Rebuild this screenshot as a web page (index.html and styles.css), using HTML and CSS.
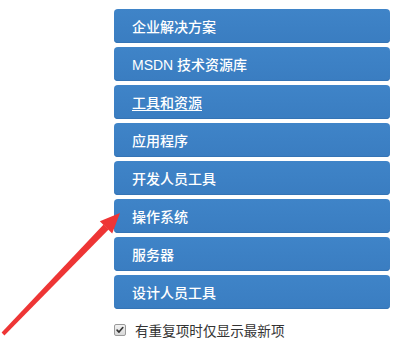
FILE: index.html
```html
<!DOCTYPE html>
<html lang="zh-CN">
<head>
<meta charset="utf-8">
<title>菜单</title>
<link rel="stylesheet" href="styles.css">
</head>
<body>
<div class="page">
  <ul class="menu">
    <li class="item">企业解决方案</li>
    <li class="item">MSDN 技术资源库</li>
    <li class="item"><span class="link">工具和资源</span></li>
    <li class="item">应用程序</li>
    <li class="item">开发人员工具</li>
    <li class="item">操作系统</li>
    <li class="item">服务器</li>
    <li class="item">设计人员工具</li>
  </ul>
  <label class="option">
    <span class="box"><svg viewBox="0 0 11 11" width="11" height="11"><path d="M2.3 5.6 L4.4 7.8 L8.6 2.8" fill="none" stroke="#333" stroke-width="1.8" stroke-linecap="round" stroke-linejoin="round"/></svg></span>
    <span class="label">有重复项时仅显示最新项</span>
  </label>
  <svg class="arrow" width="407" height="346" viewBox="0 0 407 346">
    <polygon points="1.6,332.6 103.6,224.6 108.6,229.4 4.4,335.4" fill="#ee3535"/>
    <polygon points="120,213 99.8,221.2 112.2,233.4" fill="#ee3535"/>
  </svg>
</div>
</body>
</html>
```
FILE: styles.css
```css
html, body {
  margin: 0;
  padding: 0;
  background: #ffffff;
}
.page {
  position: relative;
  width: 407px;
  height: 346px;
  overflow: hidden;
  font-family: "Liberation Sans", "Noto Sans CJK SC", sans-serif;
}
.menu {
  list-style: none;
  margin: 0;
  padding: 9px 0 0 114px;
  width: 276px;
  display: flex;
  flex-direction: column;
  gap: 4px;
}
.item {
  height: 34px;
  box-sizing: border-box;
  display: flex;
  align-items: center;
  padding-left: 18px;
  border-radius: 4px;
  background: linear-gradient(#3f84c8, #3a7dc1);
  box-shadow: inset 0 -1px 0 #3574b5;
  color: #ffffff;
  font-size: 14px;
  font-weight: 500;
}
.link {
  text-decoration: underline;
  text-underline-offset: 2px;
}
.option {
  display: flex;
  align-items: center;
  margin: 11px 0 0 114px;
  gap: 9px;
  color: #333333;
  font-size: 13.6px;
}
.box {
  width: 12px;
  height: 12px;
  box-sizing: border-box;
  border: 1px solid #9a9a9a;
  border-radius: 2px;
  background: linear-gradient(#f2f2f2, #d8d8d8);
  display: flex;
  align-items: center;
  justify-content: center;
}
.box svg {
  display: block;
  width: 10px;
  height: 10px;
}
.arrow {
  position: absolute;
  left: 0;
  top: 0;
  pointer-events: none;
}
```
